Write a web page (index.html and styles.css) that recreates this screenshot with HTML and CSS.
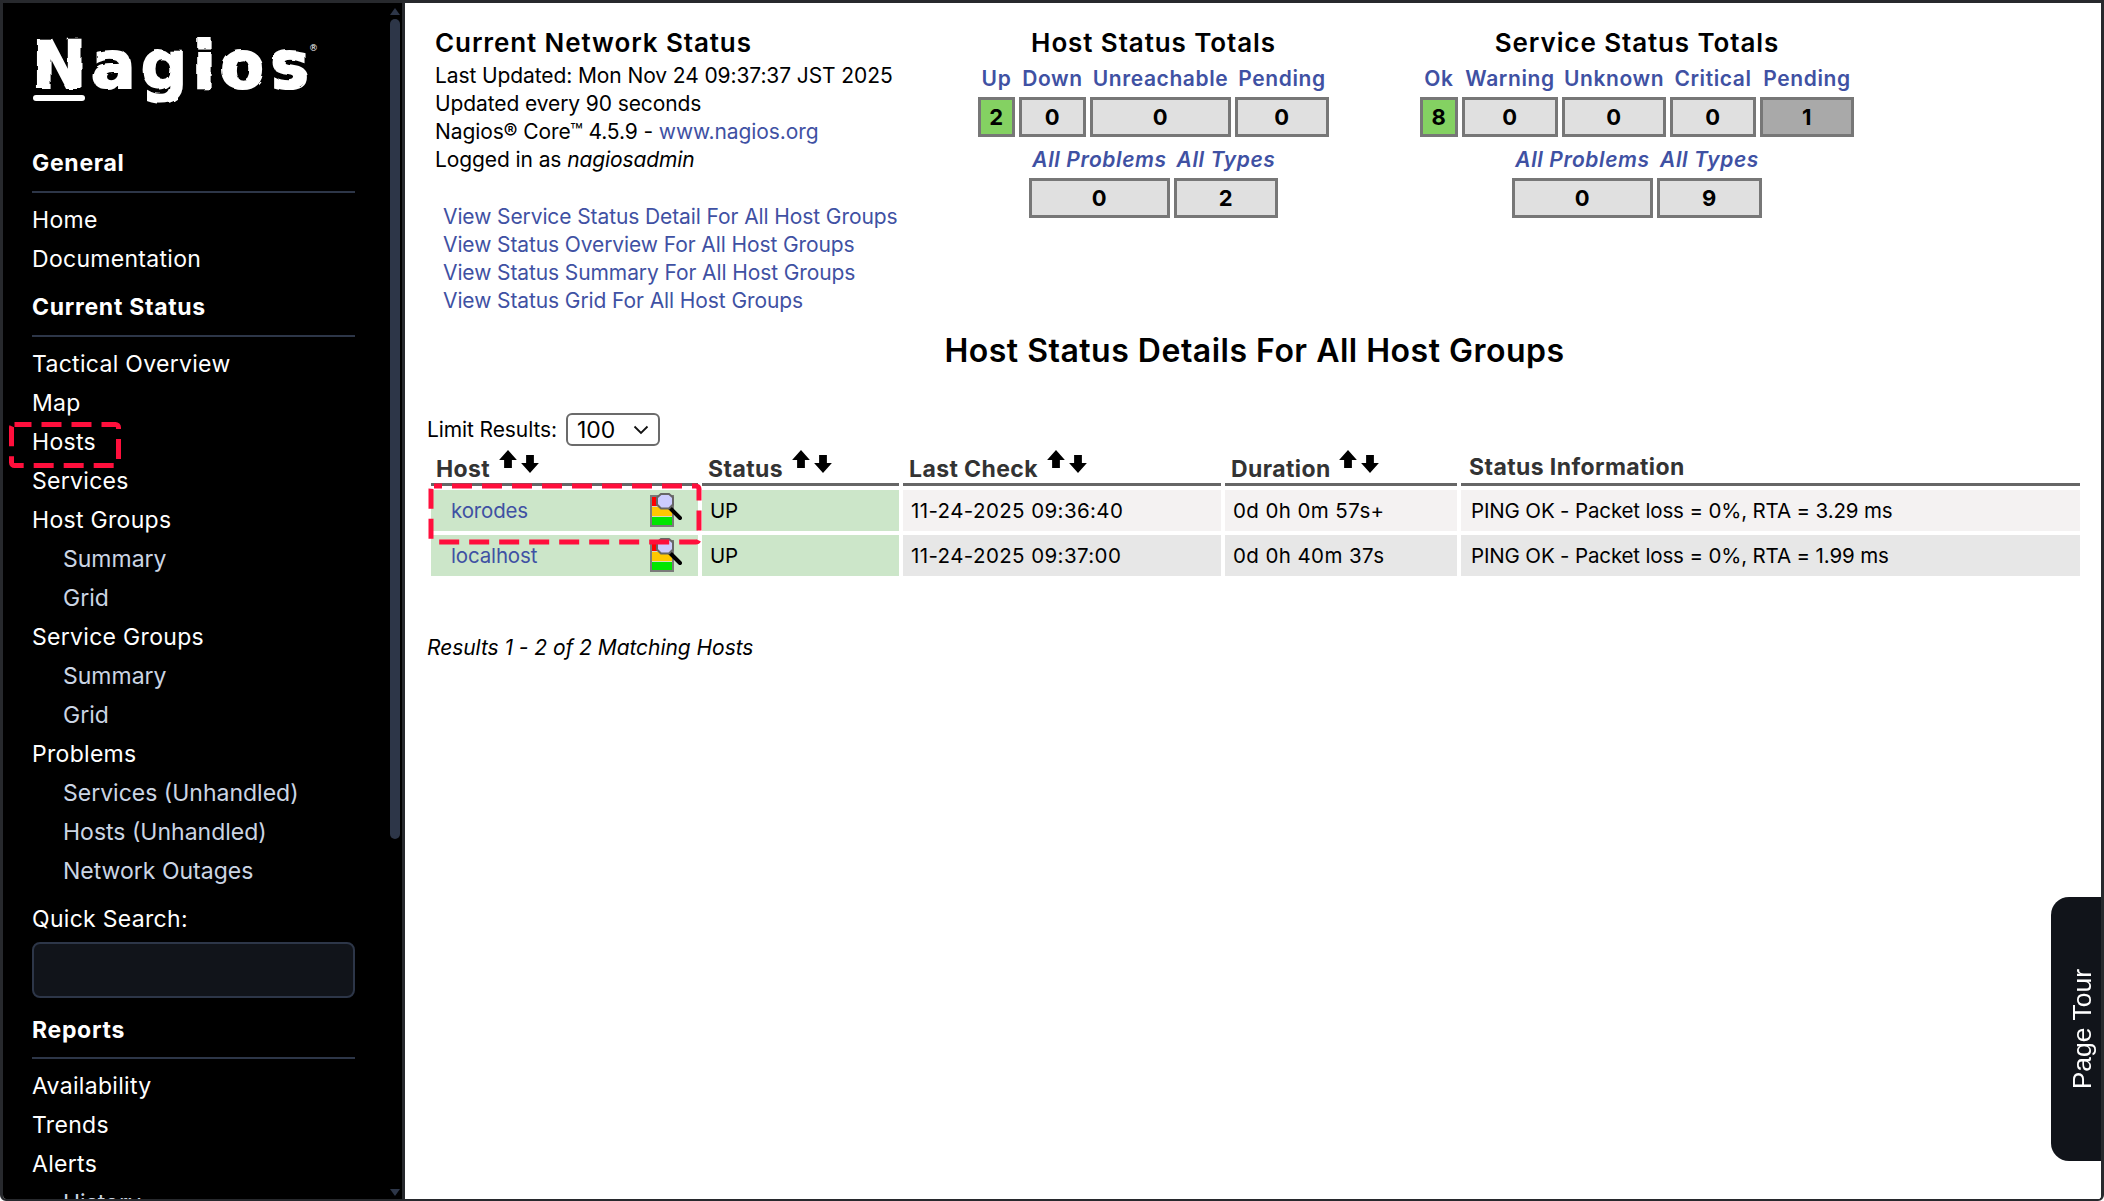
FILE: index.html
```html
<!DOCTYPE html>
<html lang="en">
<head>
<meta charset="utf-8">
<title>Nagios Core</title>
<link rel="stylesheet" href="styles.css">
</head>
<body>
<svg class="defs" width="0" height="0" aria-hidden="true"><defs><filter id="wobble" x="-5%" y="-5%" width="110%" height="110%"><feTurbulence type="fractalNoise" baseFrequency="0.06" numOctaves="2" seed="4"/><feDisplacementMap in="SourceGraphic" scale="4"/></filter></defs></svg>
<div class="window">
  <aside class="sidebar">
    <nav class="nav">
      <div class="logo"><span class="logo-word">Nagios</span><span class="logo-under"></span><span class="logo-r">®</span></div>
      <h2 class="nav-head">General</h2>
      <ul class="nav-list">
        <li>Home</li>
        <li>Documentation</li>
      </ul>
      <h2 class="nav-head">Current Status</h2>
      <ul class="nav-list">
        <li>Tactical Overview</li>
        <li>Map</li>
        <li>Hosts</li>
        <li>Services</li>
        <li>Host Groups</li>
        <li class="sub">Summary</li>
        <li class="sub">Grid</li>
        <li>Service Groups</li>
        <li class="sub">Summary</li>
        <li class="sub">Grid</li>
        <li>Problems</li>
        <li class="sub">Services (Unhandled)</li>
        <li class="sub">Hosts (Unhandled)</li>
        <li class="sub">Network Outages</li>
      </ul>
      <div class="search-label">Quick Search:</div>
      <div class="search-box"></div>
      <h2 class="nav-head nav-reports">Reports</h2>
      <ul class="nav-list">
        <li>Availability</li>
        <li>Trends</li>
        <li>Alerts</li>
        <li class="sub">History</li>
      </ul>
    </nav>
    <div class="scrollbar">
      <span class="sb-up"></span>
      <span class="sb-thumb"></span>
      <span class="sb-down"></span>
    </div>
    <svg class="mark mark-hosts" width="112" height="46" viewBox="0 0 112 46"><rect x="2.500" y="2.500" width="107" height="41" rx="3" class="dash dash-hosts"/></svg>
  </aside>

  <main class="main">
    <section class="top">
      <div class="netstat">
        <h1 class="infohead net-title">Current Network Status</h1>
        <p>Last Updated: Mon Nov 24 09:37:37 JST 2025</p>
        <p>Updated every 90 seconds</p>
        <p>Nagios® Core™ 4.5.9 - <a href="#">www.nagios.org</a></p>
        <p>Logged in as <i>nagiosadmin</i></p>
        <ul class="links">
          <li><a href="#">View Service Status Detail For All Host Groups</a></li>
          <li><a href="#">View Status Overview For All Host Groups</a></li>
          <li><a href="#">View Status Summary For All Host Groups</a></li>
          <li><a href="#">View Status Grid For All Host Groups</a></li>
        </ul>
      </div>

      <div class="totals totals-host">
        <h2 class="infohead">Host Status Totals</h2>
        <div class="tot-row">
          <div class="tot w37"><a href="#">Up</a><b class="box ok">2</b></div>
          <div class="tot w67"><a href="#">Down</a><b class="box">0</b></div>
          <div class="tot w141"><a href="#">Unreachable</a><b class="box">0</b></div>
          <div class="tot w94"><a href="#">Pending</a><b class="box">0</b></div>
        </div>
        <div class="tot-row tot-row2">
          <div class="tot w141"><a href="#"><i>All Problems</i></a><b class="box">0</b></div>
          <div class="tot w104"><a href="#"><i>All Types</i></a><b class="box">2</b></div>
        </div>
      </div>

      <div class="totals totals-service">
        <h2 class="infohead">Service Status Totals</h2>
        <div class="tot-row">
          <div class="tot w38"><a href="#">Ok</a><b class="box ok">8</b></div>
          <div class="tot w96"><a href="#">Warning</a><b class="box">0</b></div>
          <div class="tot w104"><a href="#">Unknown</a><b class="box">0</b></div>
          <div class="tot w86"><a href="#">Critical</a><b class="box">0</b></div>
          <div class="tot w94"><a href="#">Pending</a><b class="box pend">1</b></div>
        </div>
        <div class="tot-row tot-row2">
          <div class="tot w141"><a href="#"><i>All Problems</i></a><b class="box">0</b></div>
          <div class="tot w105"><a href="#"><i>All Types</i></a><b class="box">9</b></div>
        </div>
      </div>
    </section>

    <h1 class="page-title">Host Status Details For All Host Groups</h1>

    <div class="limit">
      <span>Limit Results:</span>
      <div class="select">100
        <svg width="16" height="10" viewBox="0 0 16 10"><path d="M1.500 1.500 8 8l6.500-6.500" fill="none" stroke="#111" stroke-width="1.800"/></svg>
      </div>
    </div>

    <table class="status">
      <colgroup>
        <col class="c1"><col class="c2"><col class="c3"><col class="c4"><col>
      </colgroup>
      <thead>
        <tr>
          <th class="th-host">Host <span class="sort"><svg width="20" height="20" viewBox="0 0 18 18" class="up"><path d="M9 1 17 10h-4.500v7h-7v-7H1z"/></svg><svg width="20" height="20" viewBox="0 0 18 18" class="down"><path d="M5.500 1h7v7H17l-8 9-8-9h4.500z"/></svg></span></th>
          <th>Status <span class="sort"><svg width="20" height="20" viewBox="0 0 18 18" class="up"><path d="M9 1 17 10h-4.500v7h-7v-7H1z"/></svg><svg width="20" height="20" viewBox="0 0 18 18" class="down"><path d="M5.500 1h7v7H17l-8 9-8-9h4.500z"/></svg></span></th>
          <th>Last Check <span class="sort"><svg width="20" height="20" viewBox="0 0 18 18" class="up"><path d="M9 1 17 10h-4.500v7h-7v-7H1z"/></svg><svg width="20" height="20" viewBox="0 0 18 18" class="down"><path d="M5.500 1h7v7H17l-8 9-8-9h4.500z"/></svg></span></th>
          <th>Duration <span class="sort"><svg width="20" height="20" viewBox="0 0 18 18" class="up"><path d="M9 1 17 10h-4.500v7h-7v-7H1z"/></svg><svg width="20" height="20" viewBox="0 0 18 18" class="down"><path d="M5.500 1h7v7H17l-8 9-8-9h4.500z"/></svg></span></th>
          <th class="th-info">Status Information</th>
        </tr>
      </thead>
      <tbody>
        <tr class="odd">
          <td class="up-cell host-cell"><a href="#">korodes</a>
            <svg class="hosticon" width="34" height="36" viewBox="0 0 34 36"><rect x="2" y="3" width="24" height="32" fill="#7a7a7a"/><rect x="4" y="5" width="20" height="28" fill="#d8d8c0"/><rect x="4" y="5" width="6" height="9" fill="#ff0000"/><rect x="4" y="15" width="20" height="9" fill="#ffc800"/><rect x="4" y="25" width="20" height="8" fill="#00e600"/><path d="M22 16 32 26" stroke="#000" stroke-width="4" stroke-linecap="round"/><path d="M13 2h8l4 3.500v7l-4 4h-8l-4-4v-7z" fill="#ccccff" stroke="#666" stroke-width="2"/></svg>
          </td>
          <td class="up-cell">UP</td>
          <td class="num">11-24-2025 09:36:40</td>
          <td class="num">0d 0h 0m 57s+</td>
          <td>PING OK - Packet loss = 0%, RTA = 3.29 ms</td>
        </tr>
        <tr class="even">
          <td class="up-cell host-cell"><a href="#">localhost</a>
            <svg class="hosticon" width="34" height="36" viewBox="0 0 34 36"><rect x="2" y="3" width="24" height="32" fill="#7a7a7a"/><rect x="4" y="5" width="20" height="28" fill="#d8d8c0"/><rect x="4" y="5" width="6" height="9" fill="#ff0000"/><rect x="4" y="15" width="20" height="9" fill="#ffc800"/><rect x="4" y="25" width="20" height="8" fill="#00e600"/><path d="M22 16 32 26" stroke="#000" stroke-width="4" stroke-linecap="round"/><path d="M13 2h8l4 3.500v7l-4 4h-8l-4-4v-7z" fill="#ccccff" stroke="#666" stroke-width="2"/></svg>
          </td>
          <td class="up-cell">UP</td>
          <td class="num">11-24-2025 09:37:00</td>
          <td class="num">0d 0h 40m 37s</td>
          <td>PING OK - Packet loss = 0%, RTA = 1.99 ms</td>
        </tr>
      </tbody>
    </table>

    <p class="results"><i>Results 1 - 2 of 2 Matching Hosts</i></p>

    <svg class="mark mark-row" width="274" height="62" viewBox="0 0 274 62"><rect x="3" y="3" width="268" height="56" rx="3" class="dash dash-row"/></svg>
    <div class="tour"><span>Page Tour</span></div>
  </main>
</div>
</body>
</html>
```

FILE: styles.css
```css
* { box-sizing: border-box; }
html, body { margin: 0; padding: 0; height: 100%; }
body { background: #fff; font-family: Inter, "Liberation Sans", sans-serif; color: #000; overflow: hidden; }
a { color: #3f51a3; text-decoration: none; }
ul { list-style: none; margin: 0; padding: 0; }
h1, h2, p { margin: 0; }
.defs { display: block; height: 0; }

.window { position: relative; display: flex; width: 2104px; height: 1201px; border: 3px solid #27292d; border-bottom-width: 2px; border-radius: 0 0 6px 6px; overflow: hidden; }

.sidebar { position: relative; display: flex; width: 402px; flex: none; background: #000; border-right: 3px solid #27292d; overflow: hidden; }
.nav { width: 387px; flex: none; padding-left: 29px; color: #fff; font-size: 23px; letter-spacing: 0.3px; }
.logo { position: relative; height: 140px; padding-top: 25px; font-family: "DejaVu Sans", sans-serif; font-weight: 700; font-size: 65px; line-height: 76px; letter-spacing: 5.300px; white-space: nowrap; }
.logo-word { display: inline-block; -webkit-text-stroke: 2px #fff; filter: url(#wobble); }
.logo-under { position: absolute; left: 1px; top: 92px; width: 52px; height: 6px; border-radius: 3px; background: #fff; }
.logo-r { position: absolute; left: 277px; top: 39px; font-size: 9px; line-height: 12px; letter-spacing: 0; font-weight: 400; }
.nav-head { width: 323px; height: 50px; margin-top: 8px; font-size: 23px; font-weight: 700; line-height: 40px; border-bottom: 2px solid #2d3648; letter-spacing: 0.7px; }
.logo + .nav-head { margin-top: 0; }
.nav-list { padding-top: 8px; }
.nav-list li { height: 39px; line-height: 39px; white-space: nowrap; }
.nav-list .sub { padding-left: 31px; color: #cbd5e4; letter-spacing: 0; }
.search-label { height: 30px; line-height: 30px; margin-top: 13px; }
.search-box { width: 323px; height: 56px; margin-top: 8px; background: #11141a; border: 2px solid #2d3648; border-radius: 8px; }
.nav-reports { height: 49px; margin-top: 12px; }

.scrollbar { position: relative; width: 11px; flex: none; }
.sb-up { position: absolute; left: 0; top: 5px; border: 5px solid transparent; border-top: 0; border-bottom: 7px solid #2d3648; }
.sb-down { position: absolute; left: 0; top: 1186px; border: 5px solid transparent; border-bottom: 0; border-top: 7px solid #2d3648; }
.sb-thumb { position: absolute; left: 0; top: 16px; width: 10px; height: 820px; border-radius: 5px; background: #2d3648; }

.mark { position: absolute; z-index: 5; }
.dash { fill: none; stroke: #ff0f3c; stroke-width: 5; stroke-dasharray: 20 10; }
.dash-hosts { stroke-dashoffset: 3; }
.dash-row { stroke-dashoffset: 12; }
.mark-hosts { left: 6px; top: 419px; }
.mark-row { left: 23px; top: 480px; }

.main { position: relative; flex: 1; min-width: 0; padding: 26px 0 0 22px; background: #fff; font-size: 21px; letter-spacing: -0.1px; }
.top { display: flex; height: 300px; }
.infohead { font-size: 26px; font-weight: 600; line-height: 28px; letter-spacing: 0.9px; }
.net-title { height: 33px; }
.netstat { width: 551px; flex: none; padding-left: 8px; line-height: 28px; }
.netstat p { height: 28px; white-space: nowrap; }
.links { margin: 29px 0 0 8px; }
.links li { height: 28px; line-height: 28px; white-space: nowrap; }

.totals { display: flex; flex-direction: column; align-items: center; flex: none; }
.totals-host { width: 351px; }
.totals-service { width: 434px; margin-left: 91px; }
.tot-row { display: flex; gap: 4px; margin-top: 8px; }
.tot-row2 { margin-top: 9px; }
.tot { display: flex; flex-direction: column; align-items: center; font-size: 21px; font-weight: 600; letter-spacing: 0.6px; }
.tot a { height: 28px; line-height: 28px; white-space: nowrap; }
.box { display: block; width: 100%; height: 40px; margin-top: 4px; line-height: 35px; text-align: center; background: #e0e0e0; border: 3px solid #777; font-size: 22px; font-weight: 700; }
.box.ok { background: #84d162; }
.box.pend { background: #a9a9a9; }
.w37 { width: 37px; } .w38 { width: 38px; } .w67 { width: 67px; } .w86 { width: 86px; } .w94 { width: 94px; }
.w96 { width: 96px; } .w104 { width: 104px; } .w105 { width: 105px; } .w141 { width: 141px; }

.page-title { width: 1655px; height: 40px; margin-top: 2px; text-align: center; font-size: 32px; font-weight: 600; line-height: 40px; letter-spacing: 0.5px; }

.limit { display: flex; align-items: center; gap: 9px; height: 33px; margin-top: 42px; }
.select { display: flex; align-items: center; justify-content: space-between; width: 94px; height: 33px; padding: 0 9px; border: 2px solid #6b6b6b; border-radius: 6px; font-size: 23px; }

.status { width: 1657px; margin-top: 3px; border-collapse: separate; border-spacing: 4px; table-layout: fixed; }
.c1 { width: 267px; } .c2 { width: 197px; } .c3 { width: 318px; } .c4 { width: 232px; }
.status th { height: 33px; padding: 0 0 0 6px; text-align: left; vertical-align: bottom; border-bottom: 3px solid #666; font-size: 23px; font-weight: 700; color: #333; line-height: 27px; letter-spacing: 0.4px; white-space: nowrap; }
.status .th-host { padding-left: 5px; }
.status .th-info { padding-left: 8px; padding-bottom: 2px; }
.sort { display: inline-block; position: relative; width: 46px; height: 20px; vertical-align: baseline; }
.sort svg { position: absolute; left: 2px; top: -8px; }
.sort .down { left: 24px; top: -3px; }
.status td { height: 41px; padding: 0 0 0 10px; white-space: nowrap; font-size: 20.500px; letter-spacing: -0.15px; }
.status .num { padding-left: 8px; letter-spacing: 0.4px; }
.odd td { background: #f4f2f2; }
.even td { background: #e7e7e7; }
.status .up-cell { background: #cce6c9; padding-left: 8px; }
.status .host-cell { position: relative; padding-left: 20px; }
.hosticon { position: absolute; right: 16px; top: 2px; }
.results { margin-top: 55px; font-size: 21px; letter-spacing: -0.05px; }

.tour { position: absolute; right: 0; top: 894px; width: 50px; height: 264px; display: flex; align-items: center; justify-content: center; padding-left: 12px; background: #11141a; border-radius: 18px 0 0 18px; }
.tour span { writing-mode: vertical-rl; transform: rotate(180deg); color: #fff; font-family: "Liberation Sans", sans-serif; font-size: 26.500px; letter-spacing: 0; white-space: nowrap; }
```
